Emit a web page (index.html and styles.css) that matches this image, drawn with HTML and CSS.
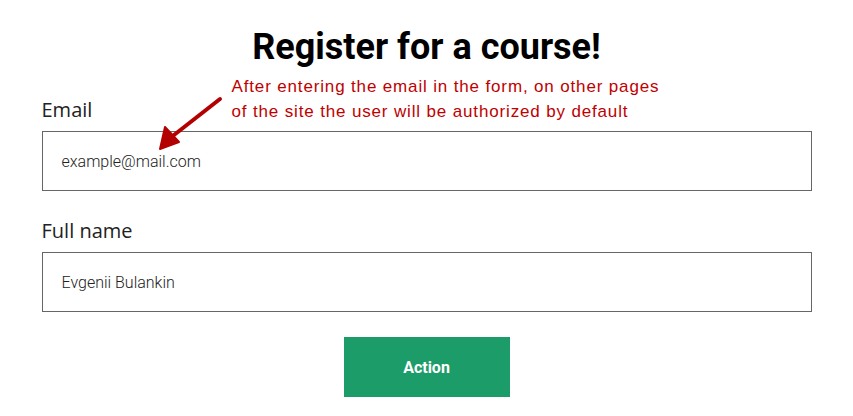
FILE: index.html
```html
<!DOCTYPE html>
<html>
<head>
<meta charset="utf-8">
<link rel="stylesheet" href="styles.css">
</head>
<body>
<main class="page">
  <h1 class="title">Register for a course!</h1>
  <form class="form">
    <div class="field">
      <label class="label">Email</label>
      <div class="input">example@mail.com</div>
    </div>
    <div class="field field-last">
      <label class="label">Full name</label>
      <div class="input">Evgenii Bulankin</div>
    </div>
    <div class="actions">
      <button type="button" class="btn">Action</button>
    </div>
  </form>
  <p class="note">After entering the email in the form, on other pages<br>of the site the user will be authorized by default</p>
  <svg class="arrow" width="80" height="70" viewBox="0 0 80 70">
    <path d="M62 4 L16 40" stroke="#b30000" stroke-width="4" stroke-linecap="round" fill="none"/>
    <path d="M2 54 L7 32 L21 47 Z" fill="#b30000" stroke="#b30000" stroke-width="2" stroke-linejoin="round"/>
  </svg>
</main>
</body>
</html>
```
FILE: styles.css
```css
* { box-sizing: border-box; }
html, body { margin: 0; padding: 0; background: #fff; }
.page {
  position: relative;
  width: 770px;
  margin: 0 auto;
  padding-top: 27px;
  font-family: Roboto, "Liberation Sans", sans-serif;
}
.title {
  margin: 0;
  text-align: center;
  font-size: 36px;
  font-weight: 700;
  line-height: 40px;
  color: #000;
}
.form {
  display: flex;
  flex-direction: column;
  margin-top: 30px;
}
.field {
  display: flex;
  flex-direction: column;
  margin-bottom: 27px;
}
.field-last {
  margin-bottom: 25px;
}
.label {
  font-family: "Open Sans", sans-serif;
  font-size: 20px;
  line-height: 26px;
  color: #222;
  margin-bottom: 8px;
}
.input {
  height: 60px;
  border: 1px solid #666;
  padding: 0 19px;
  display: flex;
  align-items: center;
  font-size: 16px;
  font-weight: 300;
  color: #222;
}
.actions {
  display: flex;
  justify-content: center;
}
.btn {
  width: 166px;
  height: 60px;
  border: 0;
  background: #1c9c69;
  color: #fff;
  font-family: Roboto, sans-serif;
  font-weight: 700;
  font-size: 16px;
}
.note {
  position: absolute;
  left: 190px;
  top: 74px;
  margin: 0;
  font-family: "Liberation Sans", Arial, sans-serif;
  font-size: 17px;
  line-height: 25px;
  letter-spacing: 0.85px;
  color: #c00000;
}
.arrow {
  position: absolute;
  left: 116px;
  top: 95px;
}
```
